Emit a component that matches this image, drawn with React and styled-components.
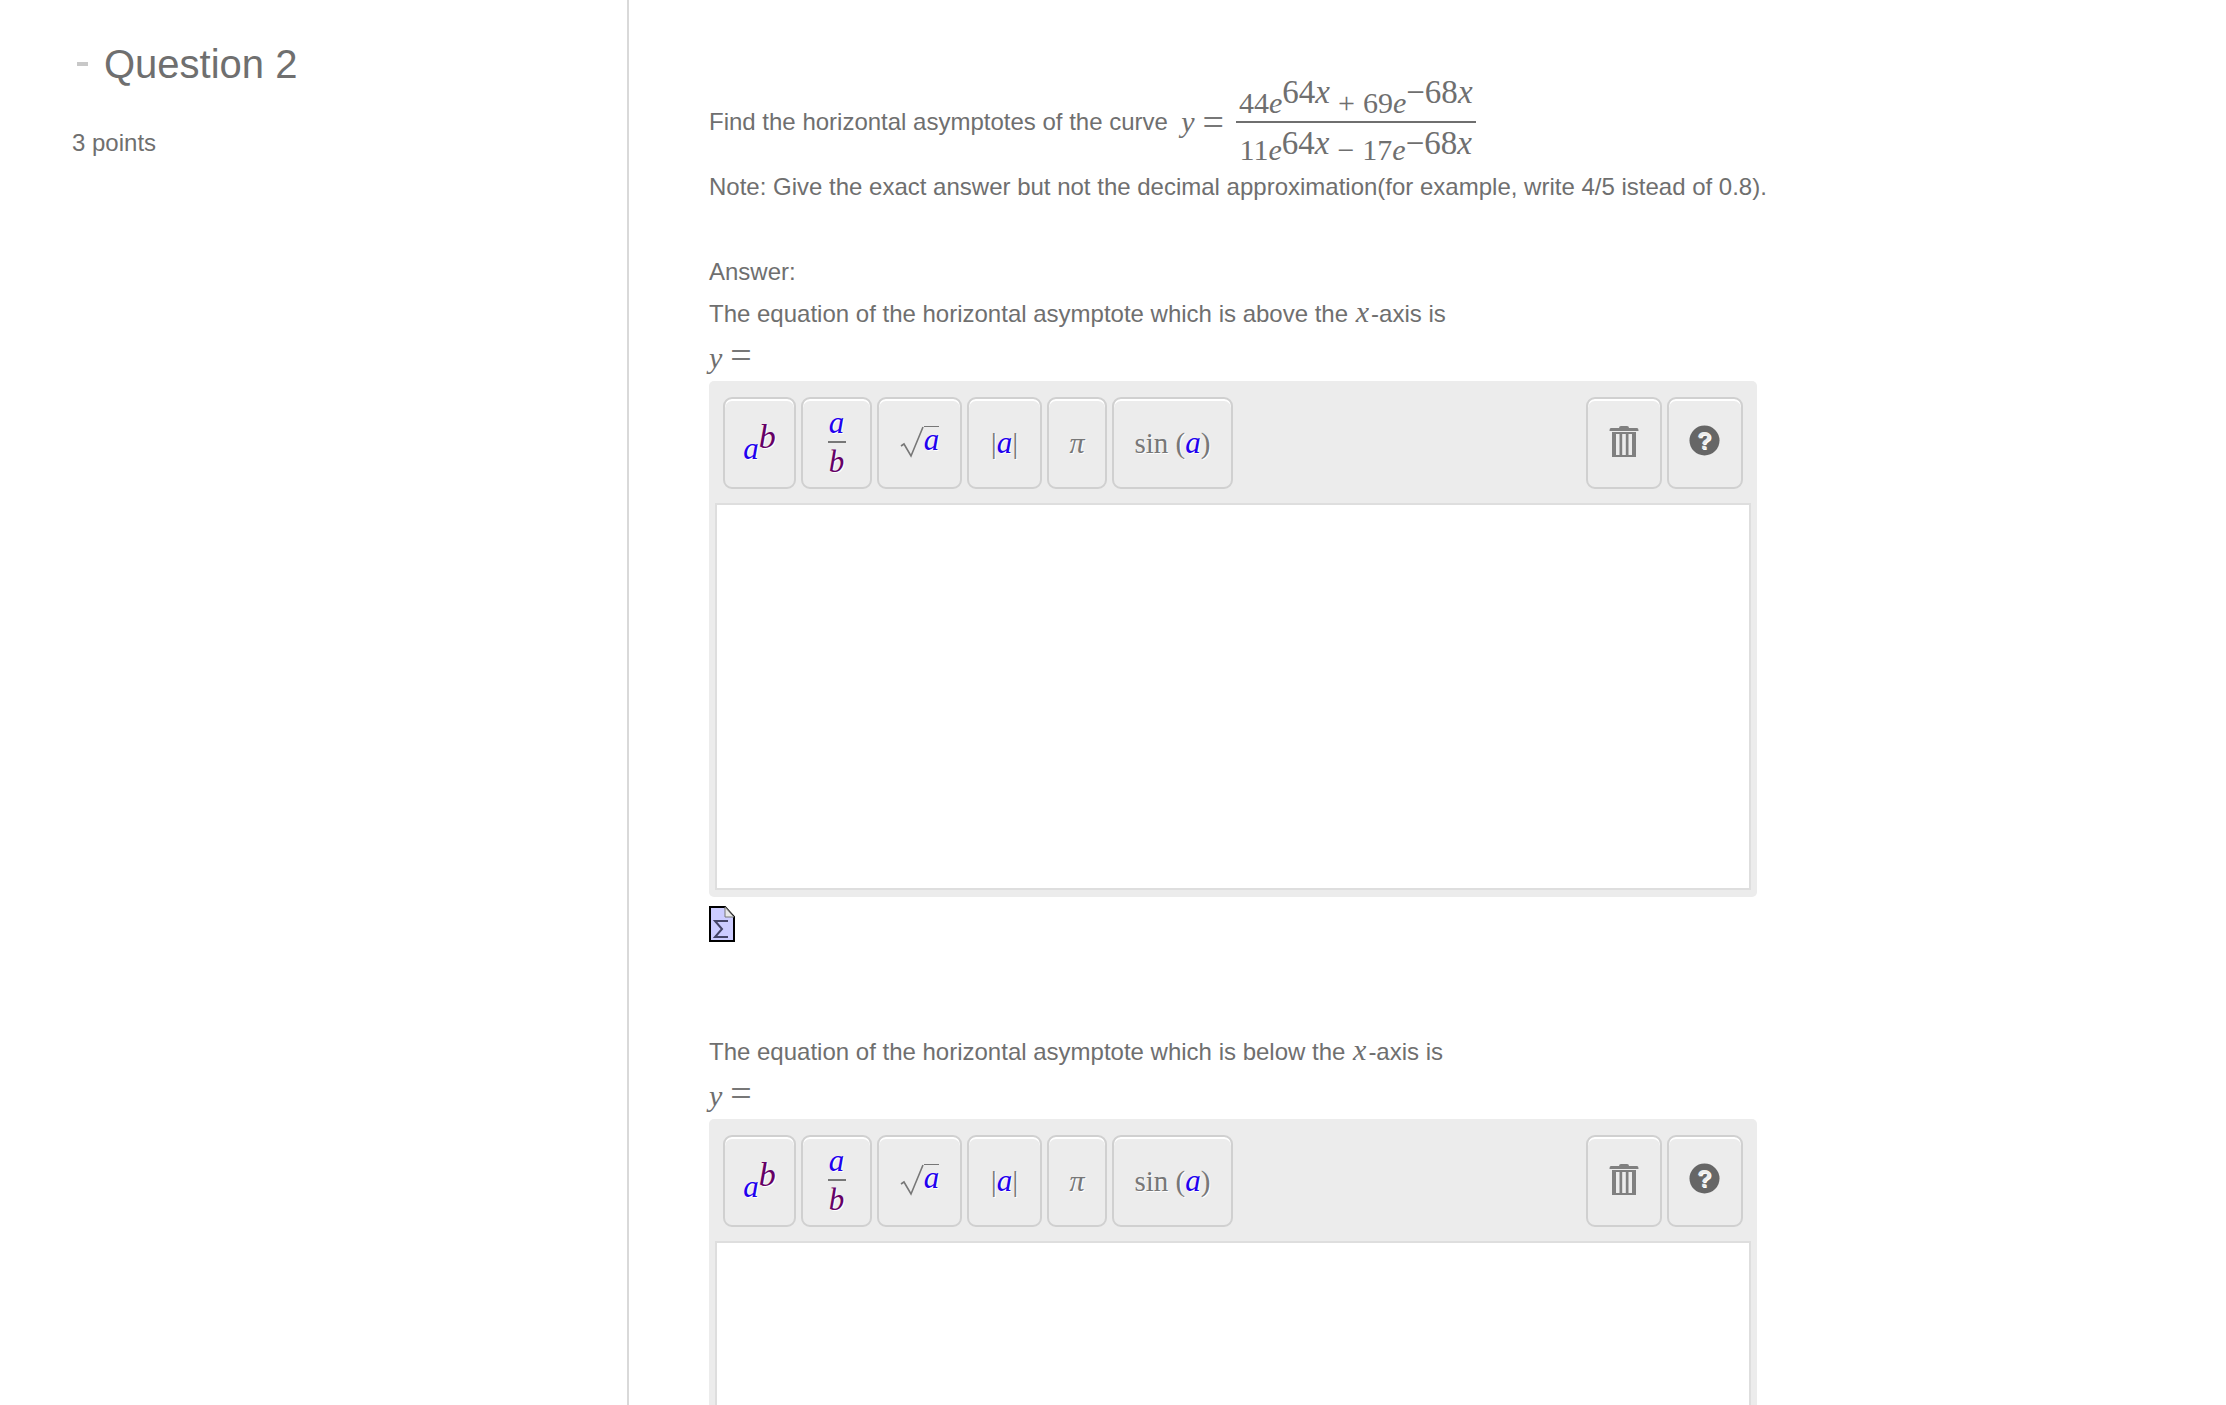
import React from "react";
import styled, { createGlobalStyle } from "styled-components";

const GlobalStyle = createGlobalStyle`
	html, body {
		margin: 0;
		padding: 0;
		background: #ffffff;
		overflow: hidden;
	}
	* {
		box-sizing: border-box;
	}
`;

const Page = styled.div`
	display: flex;
	height: 1405px;
	overflow: hidden;
	font-family: "Liberation Sans", Arial, sans-serif;
	font-size: 24px;
	color: #6f6f6f;
`;

const Sidebar = styled.aside`
	width: 629px;
	flex-shrink: 0;
	border-right: 2px solid #d9d9d9;
	padding: 38px 0 0 72px;
`;

const TitleRow = styled.div`
	display: flex;
	align-items: center;
	height: 52px;
	padding-left: 5px;
	gap: 16px;
`;

const CollapseMark = styled.span`
	width: 11px;
	height: 4px;
	background: #c8c8c8;
`;

const Title = styled.h2`
	margin: 0;
	font-size: 40px;
	font-weight: normal;
	line-height: 52px;
	color: #6f6f6f;
`;

const Points = styled.p`
	margin: 39px 0 0;
	line-height: 28px;
`;

const Main = styled.main`
	padding: 76px 0 0 80px;
	width: 1128px;
`;

const QuestionRow = styled.div`
	display: flex;
	align-items: center;
	height: 91px;
	white-space: nowrap;
`;

const Line = styled.p`
	margin: ${({ $top = 0 }) => $top}px 0 0;
	line-height: 40px;
	height: 40px;
	white-space: nowrap;
`;

const Math = styled.span`
	font-family: "Liberation Serif", "Times New Roman", serif;
	font-style: italic;
	font-size: 30px;
	line-height: 0;
`;

const AxisX = styled(Math)`
	margin: 0 2px 0 1px;
`;

const Equals = styled.span`
	font-family: "Liberation Serif", serif;
	font-size: 38px;
	line-height: 0;
	margin-left: 8px;
	color: #777;
`;

const Fraction = styled.span`
	display: inline-flex;
	flex-direction: column;
	align-items: center;
	margin-left: 12px;
	font-family: "Liberation Serif", serif;
	font-size: 30px;
`;

const FractionTop = styled.span`
	height: 48px;
	line-height: 56px;
	padding: 0 3px;
	border-bottom: 2px solid #6f6f6f;
`;

const FractionBottom = styled.span`
	height: 46px;
	line-height: 54px;
	padding: 0 3px;
`;

const Sup = styled.sup`
	font-size: 33px;
	line-height: 0;
	vertical-align: ${({ $low }) => ($low ? "6px" : "10px")};
`;

const Op = styled.span`
	margin: 0 8px;
`;

const Panel = styled.section`
	margin-top: ${({ $top = 1 }) => $top}px;
	background: #ececec;
	border-radius: 5px;
	padding: 16px 6px 7px;
	height: 516px;
	display: flex;
	flex-direction: column;
`;

const Toolbar = styled.div`
	display: flex;
	gap: 5px;
	padding: 0 8px;
	height: 92px;
	flex-shrink: 0;
`;

const ToolButton = styled.button`
	width: ${({ $w }) => $w}px;
	height: 92px;
	padding: 0;
	flex-shrink: 0;
	display: flex;
	align-items: center;
	justify-content: center;
	background: #ececec;
	border: 2px solid #d0d0d0;
	border-radius: 9px;
	box-shadow: inset 0 2px 0 #ffffff;
	font-family: "Liberation Serif", serif;
	font-size: ${({ $size = 30 }) => $size}px;
	color: #777;
	text-shadow: 1px 1px 0 #ffffff;
	margin-left: ${({ $push }) => ($push ? "auto" : "0")};
`;

const Var = styled.i`
	color: ${({ $purple }) => ($purple ? "#660066" : "#2200ee")};
	font-size: ${({ $size = 31 }) => $size}px;
`;

const PowerStack = styled.span`
	display: inline-flex;
	align-items: flex-start;
	margin-top: -1px;
`;

const PowerBase = styled.span`
	margin-top: 13px;
`;

const FracStack = styled.span`
	display: inline-flex;
	flex-direction: column;
	align-items: center;
	line-height: 31px;
	margin-top: -3px;
`;

const FracBar = styled.span`
	width: 18px;
	height: 2px;
	margin: 3px 0;
	background: #777;
`;

const RootWrap = styled.span`
	display: inline-flex;
	align-items: flex-start;
	margin-top: -2px;
`;

const RootBody = styled.span`
	border-top: 1px solid #777;
	line-height: 26px;
	height: 28px;
`;

const InputArea = styled.div`
	margin-top: 14px;
	flex: 1;
	background: #ffffff;
	border: 2px solid #dedede;
`;

const FileIcon = styled.svg`
	display: block;
	margin-top: 9px;
`;

const IconWrap = styled.span`
	display: flex;
	margin: ${({ $up }) => -$up}px ${({ $left = 0 }) => $left}px 0 0;
`;

const TrashIcon = () => (
	<svg width="30" height="34" viewBox="0 0 30 34">
		<path d="M10 3 Q10 1 12 1 H18 Q20 1 20 3 H28 Q29.5 3 29.5 6 H0.5 Q0.5 3 2 3 Z" fill="#808080" />
		<path d="M3 7 H27 V32 H3 Z" fill="#808080" />
		<path d="M7 9 H10.5 V30 H7 Z M13.2 9 H16.8 V30 H13.2 Z M19.5 9 H23 V30 H19.5 Z" fill="#ececec" />
	</svg>
);

const HelpIcon = () => (
	<svg width="31" height="31" viewBox="0 0 32 32">
		<circle cx="16" cy="16" r="15.5" fill="#666666" />
		<text x="16" y="25" textAnchor="middle" fontFamily="Liberation Sans" fontWeight="bold" fontSize="25" fill="#ececec">?</text>
	</svg>
);

const Editor = ({ top }) => (
	<Panel $top={top}>
		<Toolbar>
			<ToolButton $w={73}>
				<PowerStack>
					<PowerBase><Var>a</Var></PowerBase>
					<Var $purple $size={34}>b</Var>
				</PowerStack>
			</ToolButton>
			<ToolButton $w={71}>
				<FracStack>
					<Var>a</Var>
					<FracBar />
					<Var $purple>b</Var>
				</FracStack>
			</ToolButton>
			<ToolButton $w={85}>
				<RootWrap>
					<svg width="24" height="32" viewBox="0 0 24 32">
						<path d="M1 20 L4 18 L11 30 L23 1" fill="none" stroke="#777" strokeWidth="1.6" />
					</svg>
					<RootBody><Var>a</Var></RootBody>
				</RootWrap>
			</ToolButton>
			<ToolButton $w={75}>
				|<Var>a</Var>|
			</ToolButton>
			<ToolButton $w={60}>
				<i>π</i>
			</ToolButton>
			<ToolButton $w={121} $size={29}>
				sin&nbsp;(<Var>a</Var>)
			</ToolButton>
			<ToolButton $w={76} $push>
				<IconWrap $up={2}>
					<TrashIcon />
				</IconWrap>
			</ToolButton>
			<ToolButton $w={76}>
				<IconWrap $up={6} $left={1}>
					<HelpIcon />
				</IconWrap>
			</ToolButton>
		</Toolbar>
		<InputArea />
	</Panel>
);

const App = () => (
	<Page>
		<GlobalStyle />
		<Sidebar>
			<TitleRow>
				<CollapseMark />
				<Title>Question 2</Title>
			</TitleRow>
			<Points>3 points</Points>
		</Sidebar>
		<Main>
			<QuestionRow>
				Find the horizontal asymptotes of the curve&nbsp;&nbsp;
				<Math>y</Math>
				<Equals>=</Equals>
				<Fraction>
					<FractionTop>
						44<i>e</i>
						<Sup>64<i>x</i></Sup>
						<Op>+</Op>
						69<i>e</i>
						<Sup>−68<i>x</i></Sup>
					</FractionTop>
					<FractionBottom>
						11<i>e</i>
						<Sup $low>64<i>x</i></Sup>
						<Op>−</Op>
						17<i>e</i>
						<Sup $low>−68<i>x</i></Sup>
					</FractionBottom>
				</Fraction>
			</QuestionRow>
			<Line>Note: Give the exact answer but not the decimal approximation(for example, write 4/5 istead of 0.8).</Line>
			<Line $top={45}>Answer:</Line>
			<Line $top={2}>
				The equation of the horizontal asymptote which is above the <AxisX>x</AxisX>-axis is
			</Line>
			<Line $top={6}>
				<Math>y</Math>
				<Equals>=</Equals>
			</Line>
			<Editor />
			<FileIcon width="26" height="36" viewBox="0 0 26 36">
				<path d="M1 1 H16 L25 11 V35 H1 Z" fill="#ccccff" stroke="#000000" strokeWidth="2" />
				<path d="M16 1 V11 H25 Z" fill="#e8e8e8" stroke="#777" strokeWidth="1" />
				<path d="M19 15 H6 L13 23 L6 31 H19" fill="none" stroke="#444466" strokeWidth="2" />
			</FileIcon>
			<Line $top={90}>
				The equation of the horizontal asymptote which is below the <AxisX>x</AxisX>-axis is
			</Line>
			<Line $top={6}>
				<Math>y</Math>
				<Equals>=</Equals>
			</Line>
			<Editor />
		</Main>
	</Page>
);

export default App;
